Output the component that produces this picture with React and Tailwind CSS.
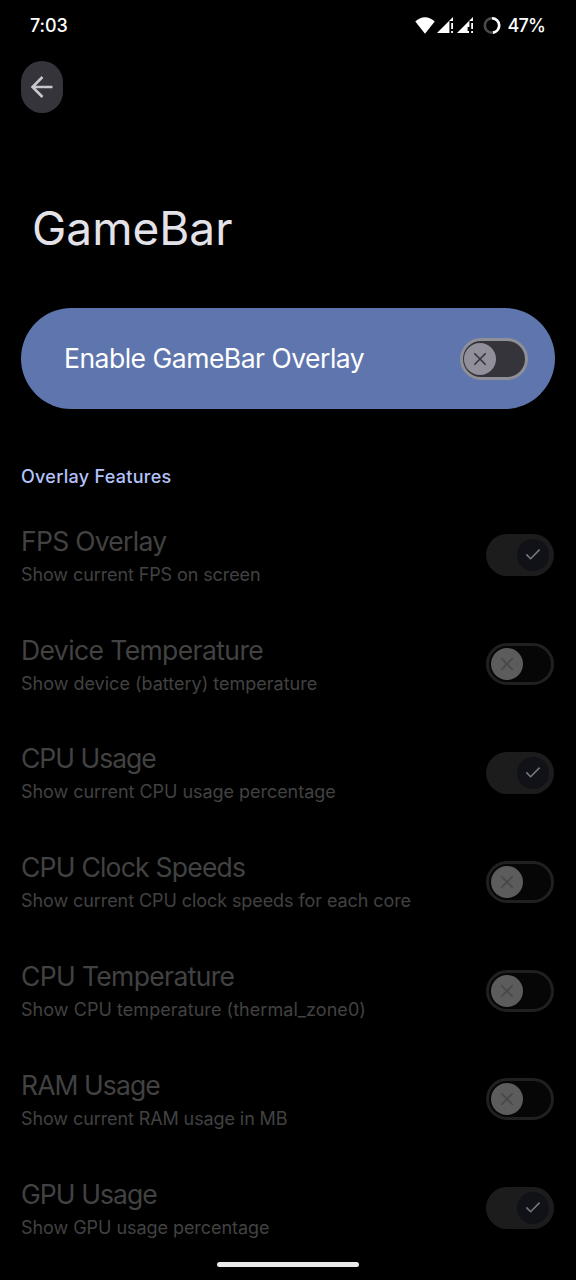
import { useState } from "react";

const FEATURES = [
  { title: "FPS Overlay", summary: "Show current FPS on screen", on: true, titleCls: "tracking-[-0.72px]", summaryCls: "tracking-[-0.1px]" },
  { title: "Device Temperature", summary: "Show device (battery) temperature", on: false, titleCls: "tracking-[-0.6px]", summaryCls: "tracking-[0px]" },
  { title: "CPU Usage", summary: "Show current CPU usage percentage", on: true, titleCls: "tracking-[-1px]", summaryCls: "tracking-[-0.04px]" },
  { title: "CPU Clock Speeds", summary: "Show current CPU clock speeds for each core", on: false, titleCls: "tracking-[-0.77px]", summaryCls: "tracking-[-0.08px]" },
  { title: "CPU Temperature", summary: "Show CPU temperature (thermal_zone0)", on: false, titleCls: "tracking-[-0.64px]", summaryCls: "tracking-[0.05px]" },
  { title: "RAM Usage", summary: "Show current RAM usage in MB", on: false, titleCls: "tracking-[-0.92px]", summaryCls: "tracking-[-0.1px]" },
  { title: "GPU Usage", summary: "Show GPU usage percentage", on: true, titleCls: "tracking-[-0.92px]", summaryCls: "tracking-[-0.05px]" },
];

const CrossIcon = () => (
  <svg width="32" height="32" viewBox="0 0 32 32" fill="none" stroke="currentColor" strokeWidth="1.6">
    <path d="M10.3 10.3L21.7 21.7M21.7 10.3L10.3 21.7" />
  </svg>
);

const CheckIcon = () => (
  <svg width="32" height="32" viewBox="0 0 32 32" fill="none" stroke="currentColor" strokeWidth="1.6">
    <path d="M9.3 15.4L13.6 19.7L22.6 10.6" />
  </svg>
);

const SignalIcon = ({ notched }) => (
  <svg width="17" height="18" viewBox="0 0 17 18" fill="#fff">
    <path d={notched ? "M0 16L16 0V4H12.4V10H10.600V14H12V16Z" : "M0 16L16 0V4H12.4V16Z"} />
    <path d="M14.2 6H16V12H14.2ZM14.2 14H16V16H14.2Z" />
  </svg>
);

const StatusBar = () => (
  <div className="flex h-[51px] items-center justify-between pr-[31px] pl-[30px] text-[18px] leading-none font-medium text-white">
    <span className="tracking-[-0.1px]">7:03</span>
    <div className="flex items-center">
      <svg width="20" height="18" viewBox="0 0 20 18" fill="#fff">
        <path d="M10 16.8L0.3 4.6C3 1.8 6.3 0.2 10 0.2S17 1.8 19.7 4.6Z" />
      </svg>
      <span className="ml-[2px] flex gap-[3px]">
        <SignalIcon />
        <SignalIcon notched />
      </span>
      <svg className="ml-[9px]" width="18" height="18" viewBox="0 0 18 18" fill="none" strokeWidth="2.6">
        <circle cx="9" cy="8.5" r="7.2" stroke="#4a4a4a" />
        <path d="M9 1.3A7.2 7.2 0 0 1 10 15.63" stroke="#fff" />
      </svg>
      <span className="ml-[6px] tracking-[-0.8px]">47%</span>
    </div>
  </div>
);

const FeatureSwitch = ({ on, onClick }) =>
  on ? (
    <button onClick={onClick} className="flex h-[42px] w-[68px] shrink-0 items-center justify-end rounded-full bg-[#1c1c1c] pr-[5px]">
      <span className="h-8 w-8 rounded-full bg-[#111118] text-[#78787c]"><CheckIcon /></span>
    </button>
  ) : (
    <button onClick={onClick} className="flex h-[42px] w-[68px] shrink-0 items-center rounded-full border-3 border-[#202020] bg-[#060606] pl-[2px]">
      <span className="h-8 w-8 rounded-full bg-[#5c5c5c] text-[#47474a]"><CrossIcon /></span>
    </button>
  );

const FeatureRow = ({ title, summary, on, titleCls, summaryCls }) => {
  const [checked, setChecked] = useState(on);
  return (
    <div className="flex h-[108.8px] items-center justify-between">
      <div className="whitespace-nowrap">
        <div className={`text-[26.5px] leading-[34px] text-[#424242] ${titleCls}`}>{title}</div>
        <div className={`text-[18px] leading-[24px] mt-[5px] text-[#424242] ${summaryCls}`}>{summary}</div>
      </div>
      <FeatureSwitch on={checked} onClick={() => setChecked(!checked)} />
    </div>
  );
};

export default function App() {
  return (
    <div className="relative h-[1280px] w-[576px] overflow-hidden bg-black font-['Inter',sans-serif]">
      <StatusBar />

      <div className="mt-[10px] pl-[21px]">
        <button className="flex h-[52px] w-[42px] items-center justify-center rounded-full bg-[#35343b]">
          <svg width="24" height="24" viewBox="0 0 24 24" fill="none" stroke="#c8c6d0" strokeWidth="2.6">
            <path d="M22.5 12H3M12.5 2L2.5 12L12.5 22" />
          </svg>
        </button>
      </div>

      <h1 className="mt-[87px] pl-[32px] text-[46px] leading-[56px] tracking-[0px] text-[#e4e2e9]">GameBar</h1>

      <div className="mt-[52px] mr-[21px] ml-[21px] flex h-[101px] items-center justify-between rounded-full bg-[#5f75ad] pr-[27px] pl-[43px]">
        <span className="text-[26.5px] tracking-[-0.5px] text-white">Enable GameBar Overlay</span>
        <button className="flex h-[42px] w-[68px] items-center rounded-full border-3 border-[#8f8f97] bg-[#35343b] pl-[1px]">
          <span className="h-8 w-8 rounded-full bg-[#91909a] text-[#35343b]"><CrossIcon /></span>
        </button>
      </div>

      <h2 className="mt-[55px] pl-[21px] text-[18px] leading-[26px] font-medium tracking-[0.28px] text-[#b5c4fb]">Overlay Features</h2>

      <div className="mt-[11px] flex flex-col pr-[22px] pl-[21px]">
        {FEATURES.map((feature) => (
          <FeatureRow key={feature.title} {...feature} />
        ))}
      </div>

      {/* Gesture pill */}
      <div className="absolute bottom-[13px] left-[217px] h-[5px] w-[142px] rounded-full bg-[#ebebeb]" />
    </div>
  );
}
